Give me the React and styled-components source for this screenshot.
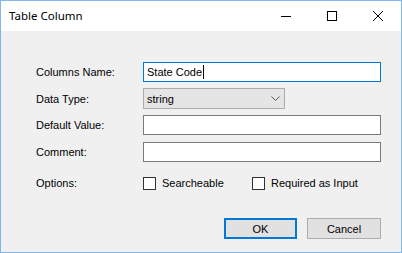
import React from 'react';
import styled, { createGlobalStyle } from 'styled-components';

const Global = createGlobalStyle`
  html, body { margin: 0; padding: 0; background: #fff; }
  body { font-family: "Liberation Sans", Arial, sans-serif; font-size: 11px; color: #000; }
  * { box-sizing: border-box; }
`;

const Window = styled.div`
  width: 402px;
  height: 253px;
  border: 1px solid #80b7ee;
  display: flex;
  flex-direction: column;
  background: #f0f0f0;
`;

const TitleBar = styled.div`
  height: 30px;
  background: #fff;
  display: flex;
  align-items: center;
`;

const Title = styled.div`
  flex: 1;
  padding-left: 8px;
  font-family: "Noto Sans", sans-serif;
  font-size: 11.5px;
  line-height: 30px;
`;

const CaptionButton = styled.div`
  width: 46px;
  height: 30px;
  display: flex;
  align-items: center;
  justify-content: center;
`;

const Body = styled.div`
  flex: 1;
  padding: 31px 20px 0 35px;
  display: flex;
  flex-direction: column;
`;

const Row = styled.div`
  display: grid;
  grid-template-columns: 107px 1fr;
  align-items: center;
  height: ${p => p.$h}px;
  margin-bottom: ${p => p.$gap}px;
`;

const Label = styled.div`
  line-height: 14px;
`;

const TextBox = styled.div`
  height: 100%;
  border: 1px solid ${p => (p.$focused ? '#0078d7' : '#7a7a7a')};
  background: #fff;
  display: flex;
  align-items: center;
  padding-left: 3px;
`;

const Caret = styled.span`
  display: inline-block;
  width: 1px;
  height: 14px;
  background: #000;
  margin-left: 1px;
`;

const Select = styled.div`
  width: 142px;
  height: 100%;
  border: 1px solid #adadad;
  background: #e5e5e5;
  display: flex;
  align-items: center;
  justify-content: space-between;
  padding: 0 4px 0 3px;
`;

const Options = styled.div`
  display: flex;
  align-items: center;
`;

const Check = styled.label`
  display: flex;
  align-items: center;
  gap: 6px;
  width: ${p => p.$w}px;
`;

const Box = styled.span`
  width: 13px;
  height: 13px;
  border: 1px solid #333;
  background: #fff;
`;

const Footer = styled.div`
  margin-top: auto;
  margin-bottom: 13px;
  display: flex;
  justify-content: flex-end;
  gap: 10px;
`;

const Button = styled.div`
  width: ${p => p.$w}px;
  height: 21px;
  background: #e1e1e1;
  border: ${p => (p.$default ? '2px solid #0078d7' : '1px solid #adadad')};
  display: flex;
  align-items: center;
  justify-content: center;
`;

export default function App() {
  return (
    <>
      <Global />
      <Window>
        <TitleBar>
          <Title>Table Column</Title>
          <CaptionButton>
            <svg width="10" height="10" viewBox="0 0 10 10">
              <line x1="0" y1="5.5" x2="10" y2="5.5" stroke="#000" strokeWidth="1" />
            </svg>
          </CaptionButton>
          <CaptionButton>
            <svg width="10" height="10" viewBox="0 0 10 10">
              <rect x="0.5" y="0.5" width="9" height="9" fill="none" stroke="#000" strokeWidth="1" />
            </svg>
          </CaptionButton>
          <CaptionButton>
            <svg width="10" height="10" viewBox="0 0 10 10">
              <path d="M0 0L10 10M10 0L0 10" stroke="#000" strokeWidth="1" />
            </svg>
          </CaptionButton>
        </TitleBar>
        <Body>
          <Row $h={20} $gap={6}>
            <Label>Columns Name:</Label>
            <TextBox $focused>State Code<Caret /></TextBox>
          </Row>
          <Row $h={21} $gap={6}>
            <Label>Data Type:</Label>
            <Select>
              <span>string</span>
              <svg width="9" height="5" viewBox="0 0 9 5">
                <path d="M0.5 0.5L4.5 4.5L8.5 0.5" fill="none" stroke="#555" strokeWidth="1" />
              </svg>
            </Select>
          </Row>
          <Row $h={20} $gap={7}>
            <Label>Default Value:</Label>
            <TextBox />
          </Row>
          <Row $h={20} $gap={14}>
            <Label>Comment:</Label>
            <TextBox />
          </Row>
          <Row $h={14} $gap={0}>
            <Label>Options:</Label>
            <Options>
              <Check $w={109}><Box />Searcheable</Check>
              <Check><Box />Required as Input</Check>
            </Options>
          </Row>
          <Footer>
            <Button $w={73} $default>OK</Button>
            <Button $w={74}>Cancel</Button>
          </Footer>
        </Body>
      </Window>
    </>
  );
}
